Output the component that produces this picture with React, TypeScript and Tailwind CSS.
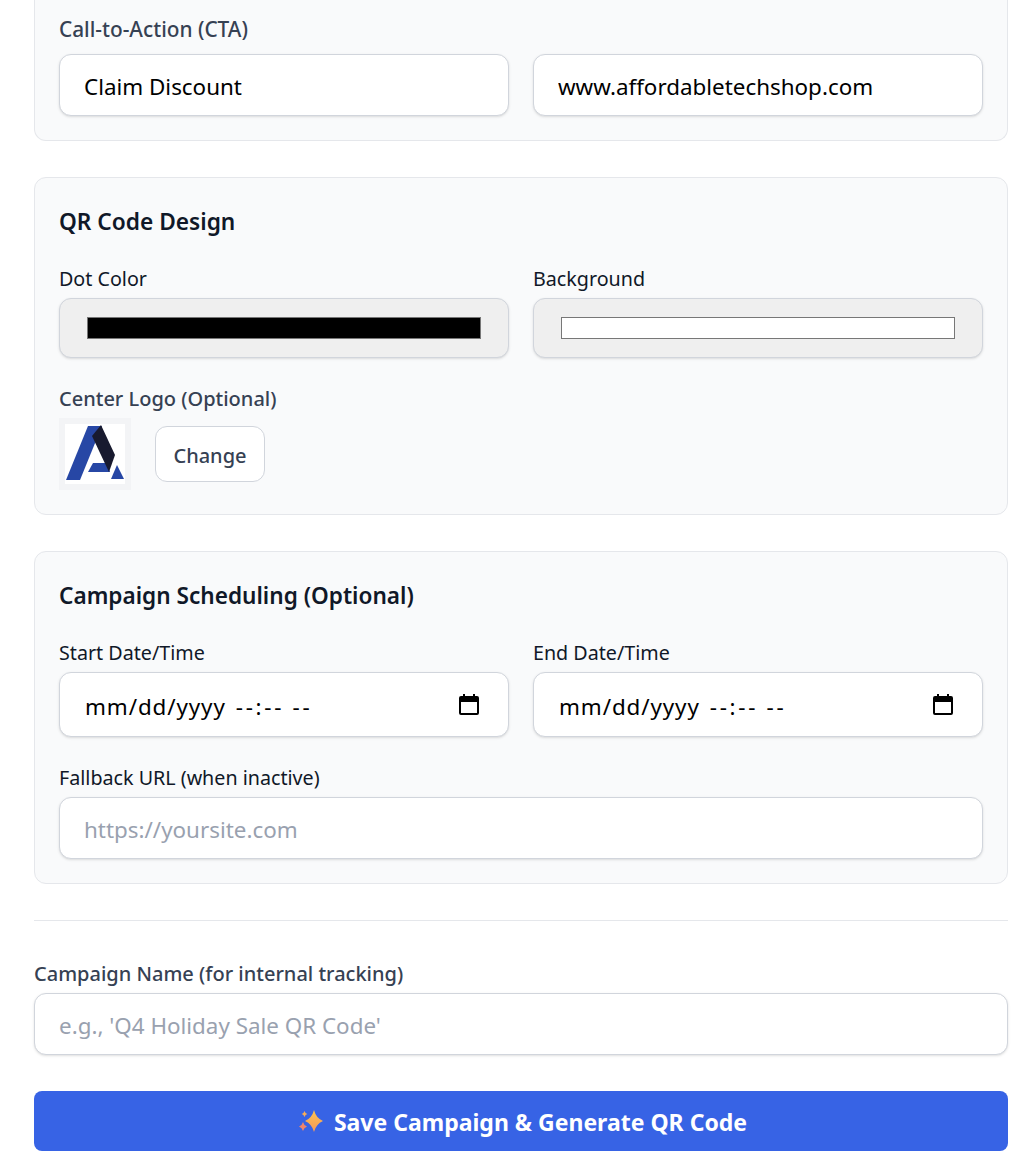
import React from "react";

const inputClass =
  "w-full h-[62px] px-6 pt-[2px] bg-white border border-gray-300 rounded-xl shadow-sm text-[22.4px] text-black placeholder:text-gray-400 outline-none";
const colorClass =
  "block w-full h-[60px] px-[25px] py-[14px] bg-[#efefef] border border-gray-300 rounded-xl shadow-sm";
const fieldLabel = "block h-9 text-[19.7px] leading-[33px] text-gray-900";
const mediumLabel = "block h-9 text-[20px] leading-[33px] font-medium text-gray-700";

function Sparkles() {
  return (
    <svg width="26" height="24" viewBox="0 0 26 24" className="shrink-0">
      <defs>
        <linearGradient id="spark" x1="0" y1="0" x2="0" y2="1">
          <stop offset="0" stopColor="#fcc44f" />
          <stop offset="1" stopColor="#f4985a" />
        </linearGradient>
      </defs>
      <path d="M16 1 Q18 9 25 12 Q18 15 16 23 Q14 15 7 12 Q14 9 16 1 Z" fill="url(#spark)" />
      <path d="M6.500 2 Q7.200 4.300 9.300 5 Q7.200 5.700 6.500 8 Q5.800 5.700 3.700 5 Q5.800 4.300 6.500 2 Z" fill="#f9ad55" />
      <path d="M5 13 Q5.900 16.500 9 17.500 Q5.900 18.500 5 22 Q4.100 18.500 1 17.500 Q4.100 16.500 5 13 Z" fill="#f0856b" />
    </svg>
  );
}

function CalendarIcon() {
  return (
    <svg width="20" height="21" viewBox="0 0 20 21" className="shrink-0">
      <path
        fillRule="evenodd"
        d="M4 0 H6 V2 H14 V0 H16 V2 H18 A2 2 0 0 1 20 4 V19 A2 2 0 0 1 18 21 H2 A2 2 0 0 1 0 19 V4 A2 2 0 0 1 2 2 H4 Z M2 8 V19 H18 V8 Z"
        fill="#000"
      />
    </svg>
  );
}

function DateField() {
  return (
    <div className="w-full h-[65px] pl-[25px] pr-[29px] flex items-center justify-between bg-white border border-gray-300 rounded-xl shadow-sm text-[22.4px] text-black">
      <span className="pt-1 whitespace-pre">
        <span className="tracking-[0.9px]">mm/dd/yyyy</span>
        <span className="ml-[10px] tracking-[2.7px]">--:-- --</span>
      </span>
      <CalendarIcon />
    </div>
  );
}

function Logo() {
  return (
    <div className="w-[72px] h-[72px] p-[6px] bg-gray-100 shrink-0">
      <svg viewBox="0 0 60 60" className="w-full h-full bg-white">
        <path d="M1 56 L23 2 L37 2 L15 56 Z" fill="#2747a5" />
        <path d="M23 48 L28 39 L42 39 L45 48 Z" fill="#2747a5" />
        <path d="M36 1 L50 31 L44 48 L27 12 Z" fill="#181a2f" />
        <path d="M46 55 L52 41 L59 55 Z" fill="#2747a5" />
      </svg>
    </div>
  );
}

export default function App() {
  return (
    <div className="bg-white min-h-[1159px] pl-[34px] pr-[25px] pb-2 font-['Noto_Sans','Open_Sans',sans-serif]">
      {/* CTA, top of the card is scrolled off */}
      <section className="bg-gray-50 border border-t-0 border-gray-200 rounded-b-xl px-6 pb-6 pt-[14px]">
        <label className="block h-10 text-[20.8px] leading-[30px] font-medium text-gray-700">Call-to-Action (CTA)</label>
        <div className="grid grid-cols-2 gap-6">
          <input className={inputClass} defaultValue="Claim Discount" />
          <input className={inputClass} defaultValue="www.affordabletechshop.com" />
        </div>
      </section>

      <section className="mt-9 bg-gray-50 border border-gray-200 rounded-xl p-6">
        <h3 className="h-[60px] text-[22.7px] leading-[40px] font-semibold text-gray-900">QR Code Design</h3>
        <div className="grid grid-cols-2 gap-6">
          <div>
            <label className={fieldLabel}>Dot Color</label>
            <input type="color" className={colorClass} defaultValue="#000000" />
          </div>
          <div>
            <label className={fieldLabel}>Background</label>
            <input type="color" className={colorClass} defaultValue="#ffffff" />
          </div>
        </div>
        <label className={`${mediumLabel} mt-6`}>Center Logo (Optional)</label>
        <div className="flex items-center gap-6">
          <Logo />
          <button className="w-[110px] h-14 pt-[3px] bg-white border border-gray-300 rounded-xl text-[20px] font-medium text-gray-700">
            Change
          </button>
        </div>
      </section>

      <section className="mt-9 bg-gray-50 border border-gray-200 rounded-xl p-6">
        <h3 className="h-[60px] text-[22.6px] leading-[40px] font-semibold text-gray-900">Campaign Scheduling (Optional)</h3>
        <div className="grid grid-cols-2 gap-6">
          <div>
            <label className={fieldLabel}>Start Date/Time</label>
            <DateField />
          </div>
          <div>
            <label className={fieldLabel}>End Date/Time</label>
            <DateField />
          </div>
        </div>
        <label className={`${fieldLabel} mt-6`}>Fallback URL (when inactive)</label>
        <input className={inputClass} placeholder="https://yoursite.com" />
      </section>

      <hr className="mt-9 border-gray-200" />

      <div className="mt-9">
        <label className={mediumLabel}>Campaign Name (for internal tracking)</label>
        <input className={inputClass} placeholder="e.g., 'Q4 Holiday Sale QR Code'" />
      </div>

      <button className="mt-9 w-full h-[60px] pl-[3px] flex items-center justify-center gap-[10px] bg-[#3763e5] rounded-lg text-[23px] font-bold text-white">
        <Sparkles />
        <span className="pt-[2px]">Save Campaign &amp; Generate QR Code</span>
      </button>
    </div>
  );
}
